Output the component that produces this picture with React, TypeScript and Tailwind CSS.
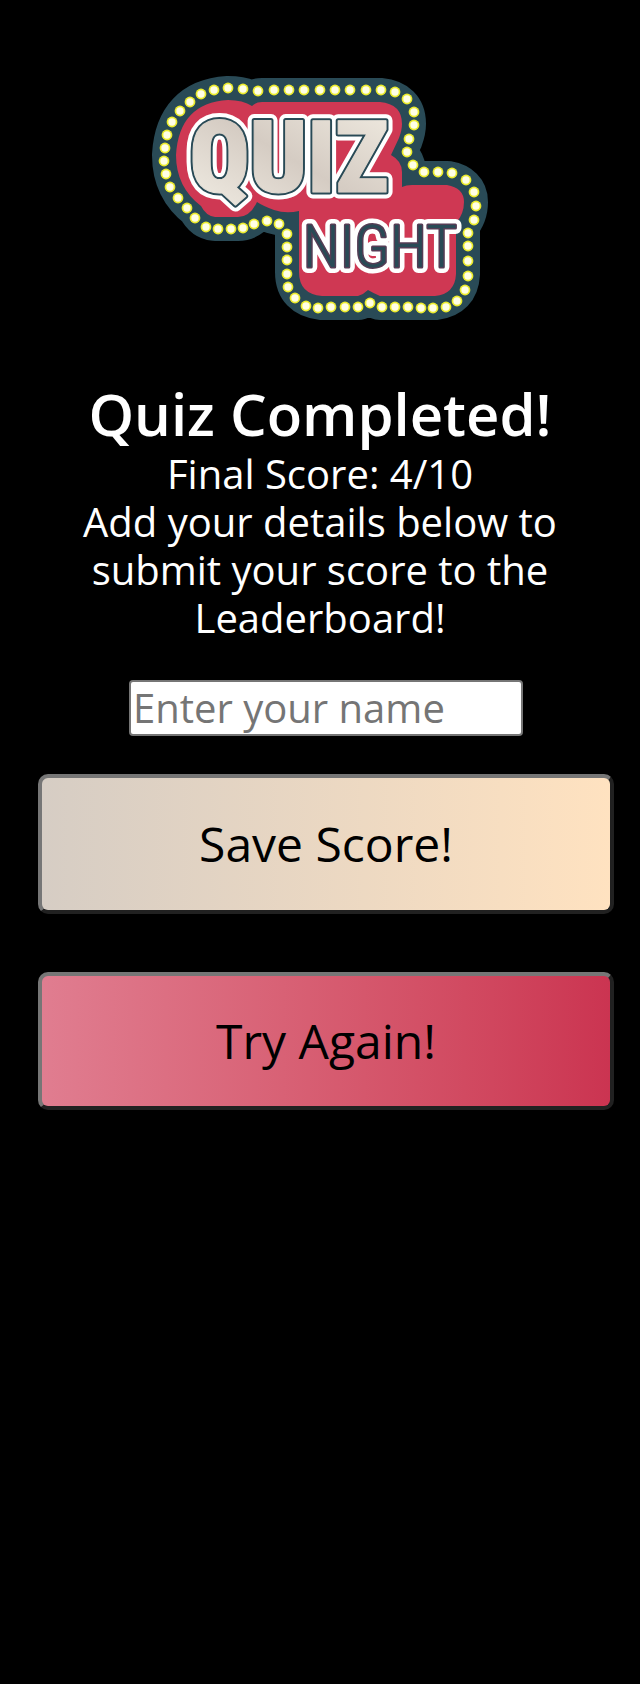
import { useState } from "react";

const BODY =
  "M228 100 Q243 100 252 106 Q256 102 262 102 L380 102 Q402 104 402 124 Q402 130 399 138 L391 155 Q402 161 402 172 L402 187 Q406 185 412 185 L447 185 Q464 188 464 202 Q464 214 456 223 L456 274 Q455 294 435 296 L380 296 Q373 293 368 290 Q364 294 358 296 L322 296 Q299 294 299 272 L299 211 Q286 214 274 210 Q263 206 257 202 Q250 217 238 217 L215 217 Q206 216 201 206 Q176 187 176 155 Q179 103 228 100 Z";

const BULBS: [number, number][] = [
  [228, 88], [243, 89], [258, 91], [274, 90], [289, 90], [304, 90], [320, 90], [335, 90],
  [350, 90], [366, 90], [381, 90], [395, 92], [407, 99], [414, 112], [414, 125], [409, 139],
  [407, 152], [413, 165], [424, 172], [438, 172], [452, 173], [466, 180], [474, 192], [476, 206],
  [474, 220], [468, 233], [468, 246], [468, 261], [468, 276], [465, 290], [457, 301], [446, 307],
  [433, 308], [421, 308], [408, 307], [395, 307], [382, 307], [370, 303], [358, 307], [345, 307],
  [331, 307], [318, 308], [306, 306], [295, 298], [288, 287], [287, 274], [287, 260], [287, 247],
  [287, 234], [279, 224], [267, 221], [254, 224], [243, 228], [231, 229], [218, 229], [206, 227],
  [195, 218], [187, 208], [178, 198], [170, 187], [166, 174], [164, 161], [165, 148], [167, 135],
  [172, 122], [180, 111], [190, 102], [201, 94], [214, 90],
];

function Logo() {
  return (
    <svg
      viewBox="152 76 336 244"
      className="h-[244px] w-[336px] max-w-full overflow-visible"
      role="img"
      aria-label="Quiz Night"
    >
      <defs>
        <linearGradient id="letters" x1="0" y1="1" x2="1" y2="0">
          <stop offset="0" stopColor="#f3efe6" />
          <stop offset="0.5" stopColor="#d5ccc3" />
          <stop offset="1" stopColor="#f1ece2" />
        </linearGradient>
      </defs>
      <path d={BODY} fill="#294a56" stroke="#294a56" strokeWidth="48" strokeLinejoin="round" />
      <path d={BODY} fill="#cf3853" />
      {BULBS.map(([x, y]) => (
        <g key={`${x}-${y}`}>
          <circle cx={x} cy={y} r="5.4" fill="#ecec2c" />
          <circle cx={x} cy={y} r="3.7" fill="#fffee6" />
        </g>
      ))}
      <g textAnchor="middle" strokeLinejoin="round">
        <g className="font-['Roboto_Condensed',sans-serif] text-[60px] font-light">
          <text x="380" y="267" fill="#ffffff" stroke="#ffffff" strokeWidth="12">NIGHT</text>
          <text x="380" y="267" fill="#553d55" stroke="#553d55" strokeWidth="3">NIGHT</text>
          <text x="380" y="267" fill="#294a56">NIGHT</text>
        </g>
        <g className="font-['Roboto_Condensed',sans-serif] text-[100px] font-black">
          <text x="289" y="192" fill="#ffffff" stroke="#ffffff" strokeWidth="13">QUIZ</text>
          <text x="289" y="192" fill="#294a56" stroke="#294a56" strokeWidth="5">QUIZ</text>
          <text x="289" y="192" fill="url(#letters)" stroke="url(#letters)" strokeWidth="1">QUIZ</text>
        </g>
      </g>
    </svg>
  );
}

const buttonBase =
  "w-full rounded-[10px] border-4 border-t-[#767676] border-l-[#767676] border-r-[#212121] border-b-[#212121] bg-linear-to-r text-5xl text-black";

export default function App() {
  const [name, setName] = useState("");
  return (
    <main className="flex min-h-screen flex-col items-center bg-black pt-[76px] font-['Open_Sans',sans-serif] text-white">
      <Logo />
      <header className="mt-[58px] px-10 text-center">
        <h1 className="text-[58px] leading-[72px] font-semibold">Quiz Completed!</h1>
        <p className="text-[40px] leading-[48px]">
          Final Score: 4/10
          <br />
          Add your details below to submit your score to the Leaderboard!
        </p>
      </header>
      <form
        className="mt-[38px] flex w-full flex-col items-center pr-[26px] pl-[38px]"
        onSubmit={(e) => e.preventDefault()}
      >
        <input
          type="text"
          aria-label="Your name"
          placeholder="Enter your name"
          value={name}
          onChange={(e) => setName(e.target.value)}
          className="h-14 w-[394px] max-w-full rounded-[4px] border-2 border-[#767676] bg-white px-[2px] text-[40px] text-black placeholder:text-[#757575]"
        />
        <button type="submit" className={`${buttonBase} mt-[38px] h-[140px] from-[#d6cdc4] to-[#ffe2c0]`}>
          Save Score!
        </button>
        <button type="button" className={`${buttonBase} mt-[58px] h-[138px] from-[#e07d90] to-[#cb3451]`}>
          Try Again!
        </button>
      </form>
    </main>
  );
}
